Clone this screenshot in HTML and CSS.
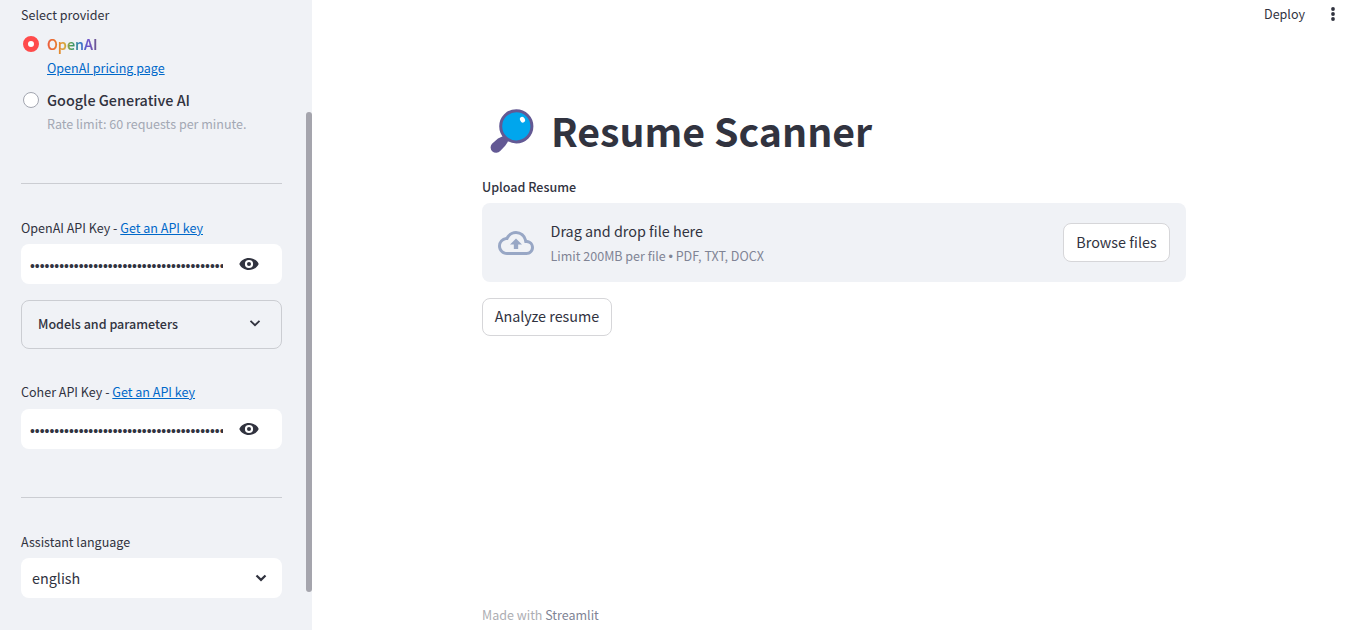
FILE: index.html
```html
<!DOCTYPE html>
<html lang="en">
<head>
<meta charset="utf-8">
<title>Resume Scanner</title>
<link rel="stylesheet" href="styles.css">
</head>
<body>
<div class="app">
  <aside class="sidebar">
    <div class="label">Select provider</div>
    <div class="option first">
      <span class="radio checked"></span>
      <div>
        <div class="name"><span class="rainbow">OpenAI</span></div>
        <div class="caption"><a class="link pricing">OpenAI pricing page</a></div>
      </div>
    </div>
    <div class="option">
      <span class="radio"></span>
      <div>
        <div class="name google">Google Generative AI</div>
        <div class="caption muted">Rate limit: 60 requests per minute.</div>
      </div>
    </div>
    <hr class="rule rule-a">
    <div class="label">OpenAI API Key - <a class="link">Get an API key</a></div>
    <div class="field">
      <span class="dots">••••••••••••••••••••••••••••••••••••••••</span>
      <svg class="eye" viewBox="0 0 20 14"><path fill-rule="evenodd" d="M10 1C5.5 1 1.9 3.4.3 7 1.9 10.6 5.5 13 10 13s8.1-2.4 9.7-6C18.1 3.4 14.5 1 10 1zM10 2.900a4.100 4.100 0 1 1 0 8.200 4.100 4.100 0 0 1 0-8.200z"/><circle cx="10" cy="7" r="2"/></svg>
    </div>
    <div class="expander">
      <span class="strong models">Models and parameters</span>
      <svg class="chevron" viewBox="0 0 12 8"><path d="M1.5 1.8 6 6.200 10.500 1.800"/></svg>
    </div>
    <div class="label coher">Coher API Key - <a class="link">Get an API key</a></div>
    <div class="field lower">
      <span class="dots">••••••••••••••••••••••••••••••••••••••••</span>
      <svg class="eye" viewBox="0 0 20 14"><path fill-rule="evenodd" d="M10 1C5.5 1 1.9 3.4.3 7 1.9 10.6 5.5 13 10 13s8.1-2.4 9.7-6C18.1 3.4 14.5 1 10 1zM10 2.900a4.100 4.100 0 1 1 0 8.200 4.100 4.100 0 0 1 0-8.200z"/><circle cx="10" cy="7" r="2"/></svg>
    </div>
    <hr class="rule rule-b">
    <div class="label language">Assistant language</div>
    <div class="field select">
      <span class="body">english</span>
      <svg class="chevron bold" viewBox="0 0 12 8"><path d="M1.5 1.5 6 5.900 10.500 1.500"/></svg>
    </div>
    <div class="scrollbar"></div>
  </aside>
  <main class="main">
    <header class="toolbar">
      <span class="deploy">Deploy</span>
      <svg class="kebab" viewBox="0 0 4 14"><circle cx="2" cy="2" r="1.9"/><circle cx="2" cy="7" r="1.9"/><circle cx="2" cy="12" r="1.9"/></svg>
    </header>
    <div class="content">
      <h1 class="title">
        <svg class="lens" viewBox="0 0 46 46"><path class="handle" d="M12.800 28.200C14 27.400 16 28.600 17.200 30c1 1.400 1.100 3 .200 4.600l-2.200 3.200-5 5.200a5.400 5.400 0 0 1-8.200-7.300l6-5.200z"/><path class="handle" d="m14 28 3-3 3 3-3 3z"/><circle class="glass" cx="26.300" cy="18.300" r="15.600"/><ellipse class="glint" cx="32.500" cy="11.700" rx="2.400" ry="3" transform="rotate(-28 32.500 11.700)"/></svg>
        <span class="title-text">Resume Scanner</span>
      </h1>
      <div class="strong upload">Upload Resume</div>
      <section class="dropzone">
        <svg class="cloud" viewBox="0 0 24 24"><path d="M19.35 10.04A7.49 7.49 0 0 0 12 4C9.11 4 6.6 5.64 5.35 8.04A5.994 5.994 0 0 0 0 14c0 3.31 2.69 6 6 6h13c2.76 0 5-2.24 5-5 0-2.64-2.05-4.78-4.65-4.96zM19 18H6c-2.21 0-4-1.79-4-4 0-2.05 1.53-3.76 3.56-3.97l1.07-.11.5-.95A5.469 5.469 0 0 1 12 6c2.62 0 4.88 1.86 5.39 4.43l.3 1.5 1.53.11A2.98 2.98 0 0 1 22 15c0 1.65-1.35 3-3 3zM8 13h2.55v3h2.9v-3H16l-4-4z"/></svg>
        <div class="instructions">
          <div class="body drag">Drag and drop file here</div>
          <div class="limit">Limit 200MB per file <span class="bullet">•</span> PDF, TXT, DOCX</div>
        </div>
        <button class="button browse">Browse files</button>
      </section>
      <button class="button analyze">Analyze resume</button>
      <footer class="footer">Made with <span class="brand">Streamlit</span></footer>
    </div>
  </main>
</div>
</body>
</html>
```
FILE: styles.css
```css
* { box-sizing: border-box; }
body {
  margin: 0;
  overflow: hidden;
  background: #fff;
  color: #31333f;
  font-family: "Noto Sans CJK SC", "Noto Sans", sans-serif;
  font-size: 12.54px;
  line-height: 20px;
  white-space: nowrap;
}
.app { display: flex; height: 630px; }
.sidebar {
  position: relative;
  width: 312px;
  flex: none;
  padding: 5px 30px 0 21px;
  background: #f0f2f6;
}
.scrollbar {
  position: absolute;
  top: 112px;
  right: 0;
  width: 6px;
  height: 480px;
  border-radius: 3px;
  background: #a5a5ad;
}
.label { height: 20px; }
.option { display: flex; gap: 8px; height: 56px; padding-left: 2px; }
.option.first { margin-top: 7px; }
.radio {
  width: 16px;
  height: 16px;
  margin-top: 4px;
  border: 1px solid #a3a6b0;
  border-radius: 50%;
  background: #fff;
}
.radio.checked { border: 5px solid #ff4b4b; }
.name { height: 24px; font-size: 14.4px; line-height: 24px; font-weight: 500; }
.caption { height: 24px; line-height: 24px; }
.muted { color: #a3a8b4; }
.link { color: #0068c9; text-decoration: underline; }
.rainbow {
  background: linear-gradient(to right, #ed5a3c, #e8772d 18%, #dca636 35%, #3f9a58 50%, #2b78c4 66%, #6e50cc 82%, #6d5a8c);
  background-clip: text;
  -webkit-background-clip: text;
  color: transparent;
  -webkit-text-stroke: 0.2px transparent;
}
.rule { height: 1px; margin: 0; border: 0; background: #cbcdd2; }
.rule-a { margin: 39px 0 34px; }
.field {
  display: flex;
  align-items: center;
  height: 40px;
  margin-top: 6px;
  padding-left: 9px;
  border-radius: 8px;
  background: #fff;
}
.field.lower { margin-top: 7px; }
.dots {
  width: 193px;
  height: 20px;
  padding-top: 2px;
  overflow: hidden;
  font-family: "Liberation Sans", sans-serif;
  font-size: 13.9px;
}
.eye { width: 20px; height: 14px; margin-left: 16px; fill: #31333f; }
.expander {
  display: flex;
  align-items: center;
  justify-content: space-between;
  height: 49px;
  margin-top: 16px;
  padding: 0 20px 2px 16px;
  border: 1px solid #cbcdd2;
  border-radius: 8px;
}
.strong { font-weight: 500; }
.chevron { width: 12px; height: 8px; margin-top: -1px; fill: none; stroke: #31333f; stroke-width: 1.8; }
.chevron.bold { margin-top: 0; stroke-width: 2.2; }
.coher { margin-top: 33px; }
.rule-b { margin: 48px 0 34px; }
.select { justify-content: space-between; padding: 0 15px 0 11px; }
.body { font-size: 14.36px; }
.main { flex: 1; }
.toolbar {
  display: flex;
  align-items: center;
  justify-content: flex-end;
  gap: 26px;
  height: 28px;
  padding-right: 14px;
}
.kebab { width: 4px; height: 14px; fill: #31333f; }
.content { display: flex; flex-direction: column; width: 704px; height: 602px; margin-left: 170px; }
.title {
  display: flex;
  align-items: center;
  gap: 15px;
  height: 54px;
  margin: 76px 0 0;
  padding-left: 8px;
  font-size: 39.25px;
  line-height: 52px;
  font-weight: 700;
}
.title-text { height: 54px; }
.lens { width: 46px; height: 46px; }
.handle { fill: #635994; }
.glass { fill: #00a6ed; stroke: #635994; stroke-width: 3; }
.glint { fill: #fff; }
.upload { margin-top: 19px; height: 20px; }
.dropzone {
  display: flex;
  align-items: center;
  height: 79px;
  margin-top: 6px;
  padding: 0 16px;
  border-radius: 8px;
  background: #f0f2f6;
}
.cloud { width: 36px; height: 36px; fill: #98a7c5; }
.instructions { flex: 1; margin-left: 16.5px; }
.drag { height: 24px; line-height: 24px; }
.limit { height: 24px; line-height: 26px; font-size: 12.52px; color: #808495; }
.bullet { font-family: "Liberation Sans", sans-serif; line-height: 1; }
.button {
  height: 39px;
  padding: 0 0 2px;
  border: 1px solid #d6d6d9;
  border-radius: 8px;
  background: #fff;
  color: #31333f;
  font-family: inherit;
  font-size: 14.36px;
  line-height: 24px;
}
.browse { width: 107px; }
.analyze { width: 130px; height: 38px; margin-top: 16px; }
.footer { margin-top: auto; padding-bottom: 5px; font-size: 12.5px; color: #adaeb3; }
.brand { color: #808495; }
```
